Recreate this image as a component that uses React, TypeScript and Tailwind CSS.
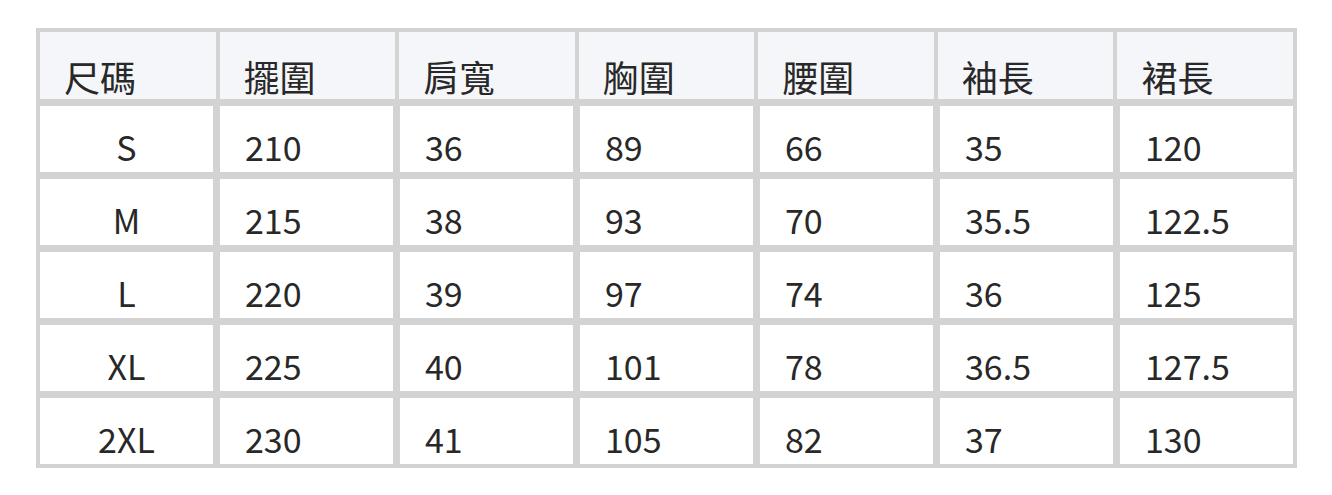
const headers = ['尺碼', '擺圍', '肩寬', '胸圍', '腰圍', '袖長', '裙長'];

const rows = [
  ['S', '210', '36', '89', '66', '35', '120'],
  ['M', '215', '38', '93', '70', '35.5', '122.5'],
  ['L', '220', '39', '97', '74', '36', '125'],
  ['XL', '225', '40', '101', '78', '36.5', '127.5'],
  ['2XL', '230', '41', '105', '82', '37', '130'],
];

export default function App() {
  return (
    <div
      className="w-[1332px] h-[495px] bg-white pl-[36px] pt-[28px] text-[#282828]"
      style={{ fontFamily: '"Noto Sans CJK TC", "Noto Sans", sans-serif' }}
    >
      <div className="w-[1261px] bg-[#d3d3d3] p-[4px] flex flex-col gap-[7px]">
        <div className="grid grid-cols-7 gap-x-[4px]">
          {headers.map((h) => (
            <div
              key={h}
              className="h-[67px] bg-[#f5f6f9] flex items-end pl-[24px] pb-[5px] text-[36px] leading-none"
            >
              {h}
            </div>
          ))}
        </div>
        {rows.map((r) => (
          <div key={r[0]} className="grid grid-cols-7 gap-x-[7px]">
            {r.map((c, i) => (
              <div
                key={i}
                className={
                  i === 0
                    ? 'h-[66px] bg-white flex items-end justify-center pb-[8px] text-[34px] leading-none'
                    : 'h-[66px] bg-white flex items-end pl-[25px] pb-[8px] text-[34px] leading-none'
                }
              >
                {c}
              </div>
            ))}
          </div>
        ))}
      </div>
    </div>
  );
}
